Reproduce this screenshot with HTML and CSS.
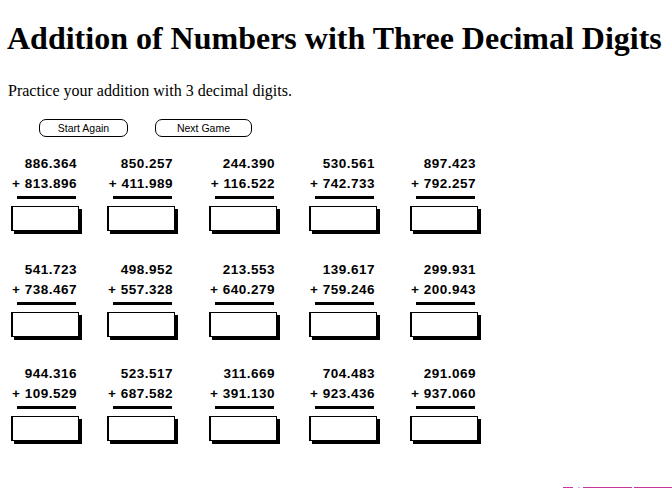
FILE: index.html
```html
<!DOCTYPE html>
<html>
<head>
<meta charset="utf-8">
<title>Addition of Numbers with Three Decimal Digits</title>
<link rel="stylesheet" href="styles.css">
</head>
<body>
<h1 class="title">Addition of Numbers with Three Decimal Digits</h1>
<p class="intro">Practice your addition with 3 decimal digits.</p>
<div class="buttons">
  <button class="btn btn-start" type="button">Start Again</button>
  <button class="btn btn-next" type="button">Next Game</button>
</div>
<div class="grid">
  <div class="cell"><div class="n">886.364</div><div class="n">+ 813.896</div><div class="rule"></div><input class="ans" type="text"></div>
  <div class="cell"><div class="n">850.257</div><div class="n">+ 411.989</div><div class="rule"></div><input class="ans" type="text"></div>
  <div class="cell"><div class="n">244.390</div><div class="n">+ 116.522</div><div class="rule"></div><input class="ans" type="text"></div>
  <div class="cell"><div class="n">530.561</div><div class="n">+ 742.733</div><div class="rule"></div><input class="ans" type="text"></div>
  <div class="cell"><div class="n">897.423</div><div class="n">+ 792.257</div><div class="rule"></div><input class="ans" type="text"></div>

  <div class="cell mid"><div class="n">541.723</div><div class="n">+ 738.467</div><div class="rule"></div><input class="ans" type="text"></div>
  <div class="cell mid"><div class="n">498.952</div><div class="n">+ 557.328</div><div class="rule"></div><input class="ans" type="text"></div>
  <div class="cell mid"><div class="n">213.553</div><div class="n">+ 640.279</div><div class="rule"></div><input class="ans" type="text"></div>
  <div class="cell mid"><div class="n">139.617</div><div class="n">+ 759.246</div><div class="rule"></div><input class="ans" type="text"></div>
  <div class="cell mid"><div class="n">299.931</div><div class="n">+ 200.943</div><div class="rule"></div><input class="ans" type="text"></div>

  <div class="cell"><div class="n">944.316</div><div class="n">+ 109.529</div><div class="rule"></div><input class="ans" type="text"></div>
  <div class="cell"><div class="n">523.517</div><div class="n">+ 687.582</div><div class="rule"></div><input class="ans" type="text"></div>
  <div class="cell"><div class="n">311.669</div><div class="n">+ 391.130</div><div class="rule"></div><input class="ans" type="text"></div>
  <div class="cell"><div class="n">704.483</div><div class="n">+ 923.436</div><div class="rule"></div><input class="ans" type="text"></div>
  <div class="cell"><div class="n">291.069</div><div class="n">+ 937.060</div><div class="rule"></div><input class="ans" type="text"></div>
</div>
<div class="footer-line">
  <span class="seg s1"></span><span class="seg s2"></span><span class="seg s3"></span><span class="seg s4"></span>
</div>
</body>
</html>
```

FILE: styles.css
```css
html, body {
  background: #fff;
}
body {
  margin: 0;
  padding: 0 8px;
  font-family: "Liberation Serif", "Times New Roman", serif;
  color: #000;
  overflow: hidden;
}
.title {
  font-size: 32px;
  font-weight: bold;
  line-height: 37px;
  margin: 20px 0 0 -1px;
  white-space: nowrap;
}
.intro {
  font-size: 16px;
  line-height: 18px;
  margin: 25px 0 0 0;
}
.buttons {
  display: flex;
  margin-top: 19px;
  padding-left: 31px;
}
.btn {
  box-sizing: border-box;
  height: 18px;
  padding: 0;
  border: 1px solid #000;
  border-radius: 7px;
  background: #fff;
  color: #000;
  font-family: "Liberation Sans", Arial, sans-serif;
  font-size: 10.5px;
  line-height: 16px;
}
.btn-start {
  width: 89px;
}
.btn-next {
  width: 97px;
  margin-left: 27px;
}
.grid {
  display: grid;
  grid-template-columns: 96px 102px 100px 101px 68px;
  row-gap: 28px;
  margin: 17px 0 0 3px;
}
.cell {
  width: 68px;
  display: flex;
  flex-direction: column;
}
.cell.mid {
  margin: 1px 0 -1px 0;
}
.n {
  font-family: "Liberation Sans", Arial, sans-serif;
  font-weight: bold;
  font-size: 13.5px;
  letter-spacing: 0.5px;
  line-height: 20px;
  text-align: right;
  padding-right: 2px;
  white-space: nowrap;
}
.rule {
  height: 3px;
  background: #000;
  margin: 2px 3px 0 6px;
}
.ans {
  box-sizing: border-box;
  width: 68px;
  height: 25px;
  margin: 7px 0 0 0;
  padding: 0;
  border: 1px solid #000;
  border-left-width: 2px;
  background: #fff;
  box-shadow: 3px 3px 0 #000;
  outline: none;
}
.footer-line {
  display: flex;
  justify-content: flex-end;
  margin: 46px -8px 0 0;
  height: 1px;
}
.seg {
  height: 1px;
  background: #c8349f;
}
.s1 { width: 10px; margin-right: 5px; }
.s2 { width: 2px; margin-right: 3px; background: #e8b4d8; }
.s3 { width: 49px; margin-right: 2px; }
.s4 { width: 38px; }
```
